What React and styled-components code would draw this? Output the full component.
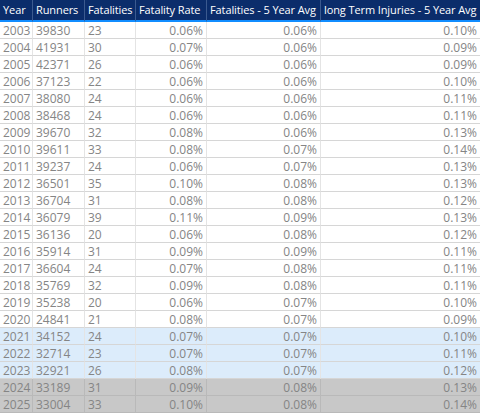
import React from 'react';
import styled, { createGlobalStyle } from 'styled-components';

const GlobalStyle = createGlobalStyle`
  html, body {
    margin: 0;
    padding: 0;
    background: #ffffff;
  }
  body {
    font-family: "Open Sans", "Noto Sans", sans-serif;
  }
`;

const columns = [
  { key: 'year', label: 'Year', width: 32, align: 'left' },
  { key: 'runners', label: 'Runners', width: 52, align: 'left' },
  { key: 'fatalities', label: 'Fatalities', width: 51, align: 'left' },
  { key: 'rate', label: 'Fatality Rate', width: 71, align: 'right' },
  { key: 'avg5', label: 'Fatalities - 5 Year Avg', width: 114, align: 'right' },
  { key: 'lti', label: 'long Term Injuries - 5 Year Avg', width: 160, align: 'right' },
];

const rows = [
  ['2003', '39830', '23', '0.06%', '0.06%', '0.10%'],
  ['2004', '41931', '30', '0.07%', '0.06%', '0.09%'],
  ['2005', '42371', '26', '0.06%', '0.06%', '0.09%'],
  ['2006', '37123', '22', '0.06%', '0.06%', '0.10%'],
  ['2007', '38080', '24', '0.06%', '0.06%', '0.11%'],
  ['2008', '38468', '24', '0.06%', '0.06%', '0.11%'],
  ['2009', '39670', '32', '0.08%', '0.06%', '0.13%'],
  ['2010', '39611', '33', '0.08%', '0.07%', '0.14%'],
  ['2011', '39237', '24', '0.06%', '0.07%', '0.13%'],
  ['2012', '36501', '35', '0.10%', '0.08%', '0.13%'],
  ['2013', '36704', '31', '0.08%', '0.08%', '0.12%'],
  ['2014', '36079', '39', '0.11%', '0.09%', '0.13%'],
  ['2015', '36136', '20', '0.06%', '0.08%', '0.12%'],
  ['2016', '35914', '31', '0.09%', '0.09%', '0.11%'],
  ['2017', '36604', '24', '0.07%', '0.08%', '0.11%'],
  ['2018', '35769', '32', '0.09%', '0.08%', '0.11%'],
  ['2019', '35238', '20', '0.06%', '0.07%', '0.10%'],
  ['2020', '24841', '21', '0.08%', '0.07%', '0.09%'],
  ['2021', '34152', '24', '0.07%', '0.07%', '0.10%'],
  ['2022', '32714', '23', '0.07%', '0.07%', '0.11%'],
  ['2023', '32921', '26', '0.08%', '0.07%', '0.12%'],
  ['2024', '33189', '31', '0.09%', '0.08%', '0.13%'],
  ['2025', '33004', '33', '0.10%', '0.08%', '0.14%'],
];

// row tint by year
const toneFor = (year) => {
  const y = Number(year);
  if (y >= 2024) return 'grey';
  if (y >= 2021) return 'blue';
  return 'plain';
};

const tones = {
  plain: '#ffffff',
  blue: '#dcecfb',
  grey: '#c8c8c8',
};

const Table = styled.div`
  width: 480px;
  height: 413px;
  overflow: hidden;
  display: grid;
  grid-template-columns: ${columns.map((c) => `${c.width}px`).join(' ')};
  grid-auto-rows: 17px;
  grid-template-rows: 22px;
  line-height: 17px;
`;

const HeaderCell = styled.div`
  background: #0b2d6b;
  color: #ffffff;
  font-size: 11px;
  letter-spacing: -0.1px;
  border-bottom: 2px solid #118dff;
  border-left: ${(p) => (p.$first ? 'none' : '1px solid #3b5a8f')};
  padding: 0 2px 0 3px;
  line-height: 20px;
  white-space: nowrap;
  overflow: hidden;
  text-align: left;
`;

const Cell = styled.div`
  background: ${(p) => tones[p.$tone]};
  color: #858585;
  font-size: 12px;
  border-bottom: 1px solid ${(p) => (p.$tone === 'grey' ? '#b9b9b9' : '#d6d6d6')};
  border-left: ${(p) => (p.$first ? 'none' : `1px solid ${p.$tone === 'grey' ? '#b9b9b9' : '#e4e4e4'}`)};
  padding: 0 3px 0 3px;
  text-align: ${(p) => p.$align};
  white-space: nowrap;
  overflow: hidden;
  box-sizing: border-box;
`;

export default function App() {
  return (
    <>
      <GlobalStyle />
      <Table>
        {columns.map((c, i) => (
          <HeaderCell key={c.key} $first={i === 0}>
            {c.label}
          </HeaderCell>
        ))}
        {rows.map((r) =>
          r.map((v, i) => (
            <Cell
              key={`${r[0]}-${i}`}
              $first={i === 0}
              $align={columns[i].align}
              $tone={toneFor(r[0])}
            >
              {v}
            </Cell>
          ))
        )}
      </Table>
    </>
  );
}
